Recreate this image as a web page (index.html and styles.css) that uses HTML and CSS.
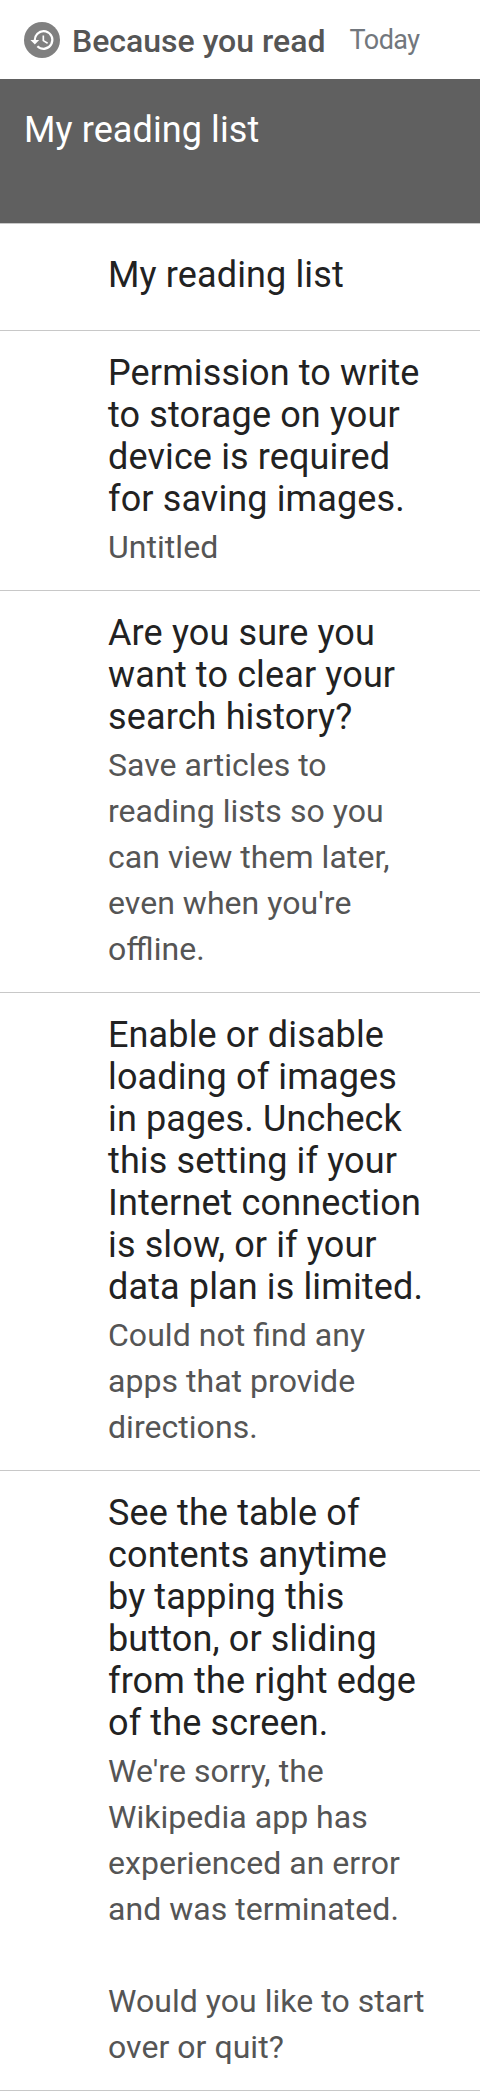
FILE: index.html
```html
<!DOCTYPE html>
<html lang="en">
<head>
<meta charset="utf-8">
<title>Because you read</title>
<link rel="stylesheet" href="styles.css">
</head>
<body>
<header class="header">
<svg class="icon" viewBox="0 0 36 36"><circle cx="18" cy="18" r="18" fill="#808080"/><g transform="translate(5.3 4.8) scale(1.1)"><path fill="#fff" d="M13 3a9 9 0 0 0-9 9H1l3.9 3.9.1.1L9 12H6a7 7 0 1 1 2.06 4.94l-1.42 1.42A9 9 0 1 0 13 3zm-1 5v5l4.28 2.54.72-1.21-3.5-2.08V8z"/></g></svg>
<h1 class="title">Because you read</h1><span class="date">Today</span>
</header>
<div class="banner">My reading list</div>
<main>
<section class="item single"><h2>My reading list</h2></section>
<section class="item"><h2>Permission to write<br>to storage on your<br>device is required<br>for saving images.</h2><p>Untitled</p></section>
<section class="item"><h2>Are you sure you<br>want to clear your<br>search history?</h2><p>Save articles to<br>reading lists so you<br>can view them later,<br>even when you're<br>offline.</p></section>
<section class="item"><h2>Enable or disable<br>loading of images<br>in pages. Uncheck<br>this setting if your<br>Internet connection<br>is slow, or if your<br>data plan is limited.</h2><p>Could not find any<br>apps that provide<br>directions.</p></section>
<section class="item"><h2>See the table of<br>contents anytime<br>by tapping this<br>button, or sliding<br>from the right edge<br>of the screen.</h2><p>We're sorry, the<br>Wikipedia app has<br>experienced an error<br>and was terminated.<br><br>Would you like to start<br>over or quit?</p></section>
</main>
</body>
</html>
```
FILE: styles.css
```css
* { box-sizing: border-box; }
body { margin: 0; background: #fff; color: #222; font-family: Roboto, sans-serif; }
.header { display: flex; align-items: center; height: 79px; padding: 0 24px; }
.icon { width: 36px; height: 36px; flex: none; }
.title { margin: 3px 0 0 12px; font-size: 32px; font-weight: 500; line-height: 42px; color: #555; white-space: nowrap; }
.date { margin: 1px 0 0 24px; font-size: 27px; line-height: 36px; letter-spacing: -0.5px; color: #72777d; }
.banner { height: 144px; padding: 30px 24px; background: #606060; color: #fff; font-size: 36px; line-height: 42px; letter-spacing: 0.1px; }
.item { padding: 21px 0 20px 108px; border-bottom: 1px solid #c8c8c8; white-space: nowrap; }
.single { height: 108px; padding-top: 30px; border-top: 1px solid #c8c8c8; }
.item h2 { margin: 0; font-size: 36px; font-weight: 400; line-height: 42px; letter-spacing: 0.13px; }
.item p { margin: 4px 0 0; font-size: 32px; line-height: 46px; letter-spacing: 0.04px; font-feature-settings: "liga" 1; color: #555; }
```
